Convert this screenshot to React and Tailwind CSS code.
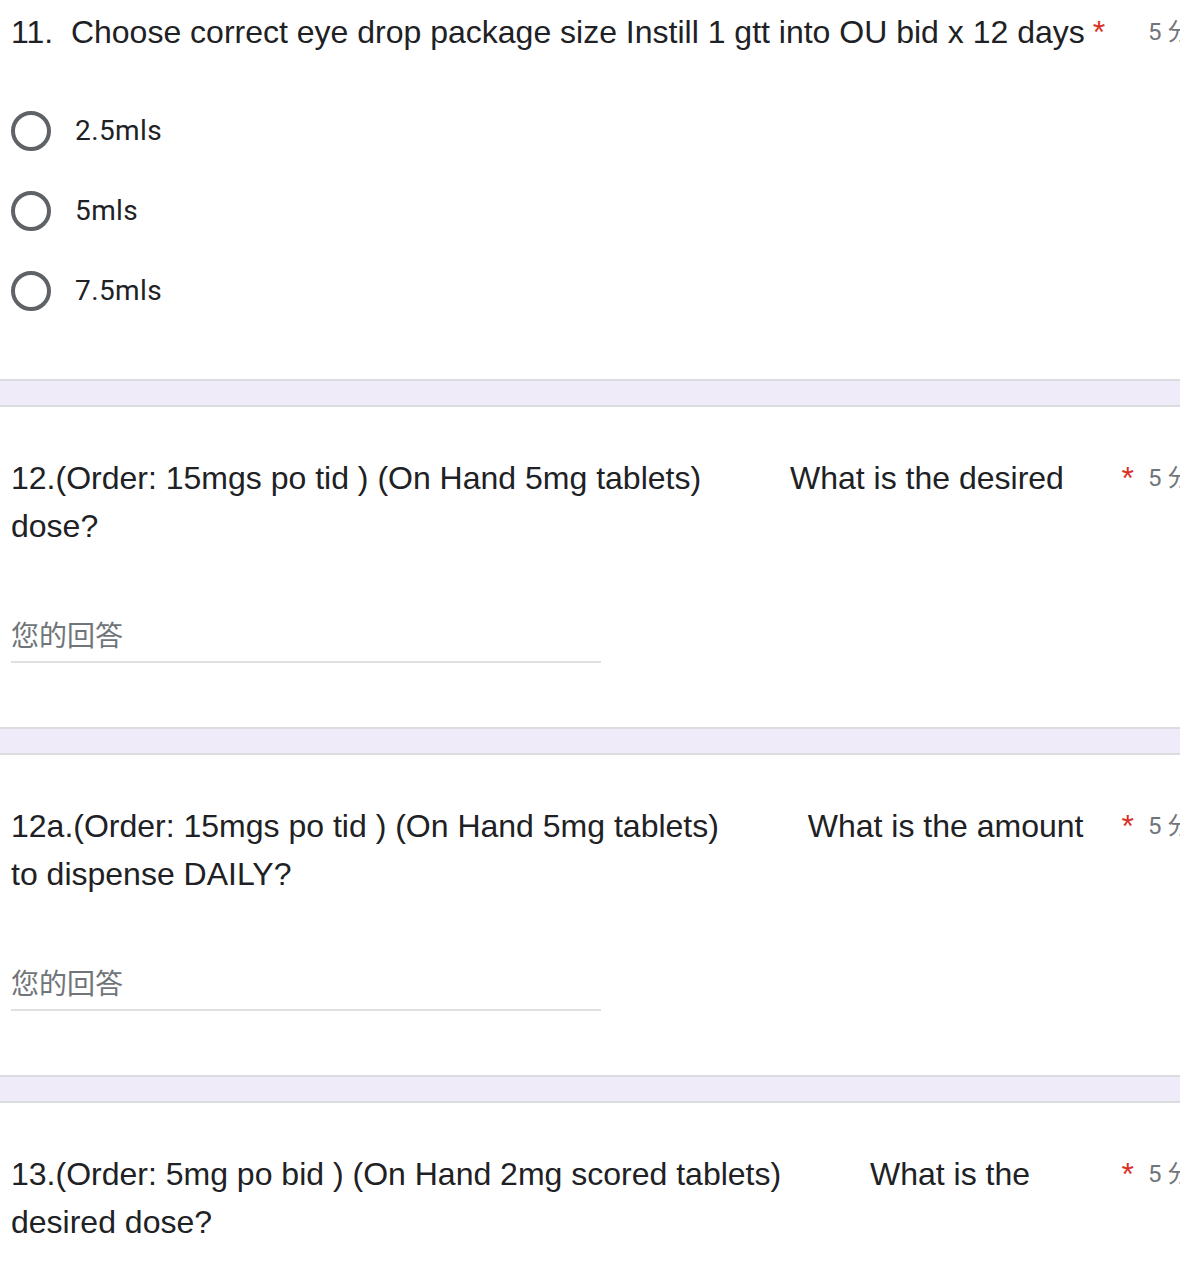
import React from 'react';

const SP = '          ';

const questions = [
  {
    id: 'q11',
    title: '11.  Choose correct eye drop package size Instill 1 gtt into OU bid x 12 days',
    options: ['2.5mls', '5mls', '7.5mls'],
  },
  {
    id: 'q12',
    title: '12.(Order: 15mgs po tid ) (On Hand 5mg tablets)' + SP + 'What is the desired dose?',
  },
  {
    id: 'q12a',
    title: '12a.(Order: 15mgs po tid ) (On Hand 5mg tablets)' + SP + 'What is the amount to dispense DAILY?',
  },
  {
    id: 'q13',
    title: '13.(Order: 5mg po bid ) (On Hand 2mg scored tablets)' + SP + 'What is the desired dose?',
  },
];

function QuestionTitle({ text }) {
  return (
    <div className="flex items-start pl-[11px]">
      <div className="flex w-[1123px] shrink-0 items-start">
        <span className="min-w-0 whitespace-pre-wrap text-[32px] leading-[48px]">{text}</span>
        <span className="ml-2 shrink-0 text-[32px] leading-[48px] text-[#d93025]">*</span>
      </div>
      <span className="ml-[14px] shrink-0 whitespace-nowrap font-['Roboto','Noto_Sans_CJK_SC',sans-serif] text-[24px] leading-[48px] text-[#70757a]">
        5 分
      </span>
    </div>
  );
}

function RadioOption({ label }) {
  return (
    <div className="flex h-[80px] items-center pl-[11px]">
      <span className="h-10 w-10 shrink-0 rounded-full border-4 border-[#5f6368]" />
      <span className="ml-[24px] font-['Roboto',sans-serif] text-[28px] tracking-[0.4px] text-[#202124]">{label}</span>
    </div>
  );
}

function ShortAnswer() {
  return (
    <div className="mt-[63px] mb-[16px] ml-[11px] w-[590px] border-b-2 border-[#e0e0e0]">
      <span className="block font-['Roboto','Noto_Sans_CJK_SC',sans-serif] text-[28px] leading-[48px] text-[#70757a]">
        您的回答
      </span>
    </div>
  );
}

export default function App() {
  return (
    <div className="h-[1279px] w-full overflow-hidden bg-[#f0ebf8] font-['Liberation_Sans',Arial,sans-serif] text-[#202124]">
      <div className="flex flex-col gap-[24px]">
        {questions.map((q, i) => (
          <div
            key={q.id}
            className={
              i === 0
                ? 'border-b-2 border-[#dadce0] bg-white pt-2 pb-[48px]'
                : 'border-y-2 border-[#dadce0] bg-white pt-[47px] pb-[48px]'
            }
          >
            <QuestionTitle text={q.title} />
            {q.options ? (
              <div className="mt-[35px]">
                {q.options.map((o) => (
                  <RadioOption key={o} label={o} />
                ))}
              </div>
            ) : (
              <ShortAnswer />
            )}
          </div>
        ))}
      </div>
    </div>
  );
}
